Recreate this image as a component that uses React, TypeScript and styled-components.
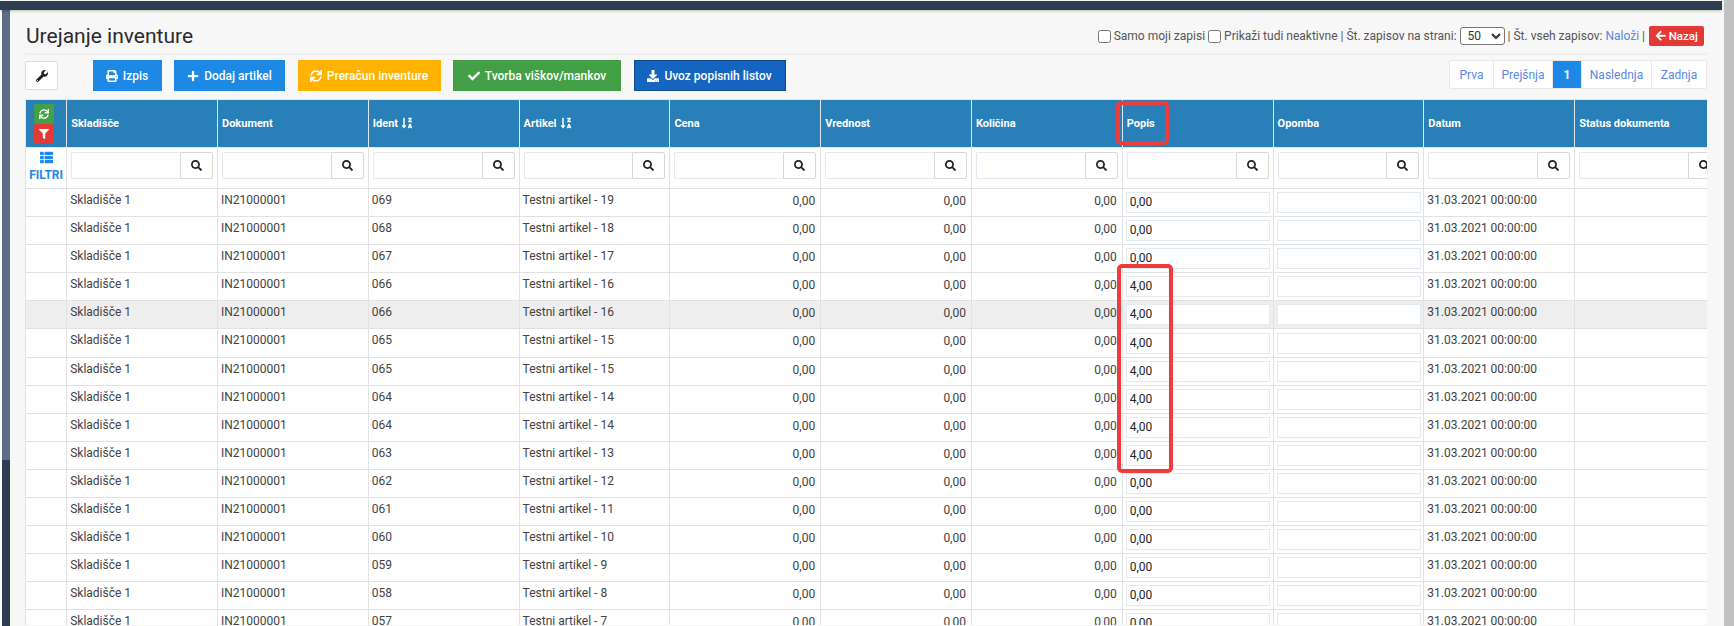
import React from "react";
import styled, { createGlobalStyle } from "styled-components";
import { FaPrint, FaPlus, FaSync, FaCheck, FaDownload, FaWrench, FaSearch, FaThList, FaFilter, FaArrowLeft, FaSortAlphaDownAlt } from "react-icons/fa";

const Global = createGlobalStyle`
  html, body { margin: 0; padding: 0; background: #fff; overflow: hidden; }
  * { box-sizing: border-box; }
  body { font-family: Roboto, "Liberation Sans", sans-serif; font-size: 12px; color: #424242; }
`;

const Shell = styled.div`
  display: flex;
  width: 1734px;
  height: 626px;
  overflow: hidden;
  background: #fff;
`;
const Main = styled.div`
  flex: 1;
  min-width: 0;
  display: flex;
  flex-direction: column;
  padding-top: 1px;
`;
const Scrollbar = styled.div`
  width: 10px;
  background: #c1c1c1;
`;
const TopBar = styled.div`
  height: 9px;
  margin-right: 2px;
  background: #2c3e50;
  box-shadow: 0 1px 3px rgba(0, 0, 0, 0.25);
  position: relative;
  z-index: 2;
`;
const Body = styled.div`
  flex: 1;
  min-height: 0;
  display: flex;
  padding-left: 2px;
`;
const Rail = styled.div`
  width: 8px;
  background: linear-gradient(to bottom, #5d6d82 0, #5d6d82 450px, #2c3e50 450px);
`;
const Panel = styled.div`
  flex: 1;
  min-width: 0;
  padding: 0 17px 0 15px;
  background: #f7f7f7;
  overflow: hidden;
`;
const Header = styled.div`
  height: 45px;
  display: flex;
  justify-content: space-between;
  align-items: center;
  padding: 9px 0 0 1px;
  border-bottom: 2px solid #eeeeee;
`;
const Title = styled.h1`
  margin: 0;
  font-size: 21px;
  font-weight: 400;
  color: #2b2b2b;
`;
const Controls = styled.div`
  display: flex;
  align-items: center;
  gap: 3px;
  padding-right: 3px;
  font-size: 12px;
  color: #555;
  white-space: nowrap;
`;
const Check = styled.input.attrs({ type: "checkbox" })`
  width: 13px;
  height: 13px;
  margin: 0;
`;
const PageSelect = styled.select`
  width: 45px;
  height: 18px;
  font-family: inherit;
  font-size: 12px;
  padding: 0 0 0 3px;
  background: #fff;
  border: 1px solid #767676;
  border-radius: 3px;
  color: #333;
`;
const LinkText = styled.a`
  color: #5b86e5;
`;
const BackButton = styled.button`
  height: 20px;
  width: 55px;
  margin-left: 1px;
  display: inline-flex;
  align-items: center;
  justify-content: center;
  gap: 2px;
  padding: 0;
  border: 0;
  border-radius: 2px;
  background: #e53935;
  color: #fff;
  font-family: inherit;
  font-size: 11.5px;
  font-weight: 500;
`;
const Toolbar = styled.div`
  height: 45px;
  padding-top: 5px;
  display: flex;
  justify-content: space-between;
  align-items: flex-start;
`;
const Actions = styled.div`
  display: flex;
  align-items: center;
  gap: 12.5px;
`;
const WrenchButton = styled.button`
  width: 33px;
  height: 29px;
  margin-right: 22px;
  padding: 0;
  display: flex;
  align-items: center;
  justify-content: center;
  background: #fff;
  border: 1px solid #dcdcdc;
  border-radius: 2px;
  color: #222;
  font-size: 12px;
`;
const ActionButton = styled.button<{ $bg: string; $edge: string; $w: number }>`
  width: ${(p) => p.$w}px;
  height: 31px;
  padding: 0;
  display: flex;
  align-items: center;
  justify-content: center;
  gap: 5px;
  background: ${(p) => p.$bg};
  border: 1px solid ${(p) => p.$edge};
  color: #fff;
  font-family: inherit;
  font-size: 12px;
  font-weight: 500;
  white-space: nowrap;
`;
const Pager = styled.div`
  display: flex;
  height: 29px;
  background: #fff;
  border: 1px solid #e8e8e8;
  border-radius: 2px;
`;
const PageLink = styled.a<{ $w: number; $active?: boolean }>`
  width: ${(p) => p.$w}px;
  display: flex;
  align-items: center;
  justify-content: center;
  font-size: 12px;
  color: ${(p) => (p.$active ? "#fff" : "#5b86e5")};
  background: ${(p) => (p.$active ? "#1e88e5" : "transparent")};
  font-weight: ${(p) => (p.$active ? 700 : 400)};
  border-right: 1px solid #e8e8e8;
  &:last-child { border-right: 0; }
`;
const TableWrap = styled.div`
  position: relative;
  overflow: hidden;
  width: 1682px;
  height: 526px;
  margin-top: -1px;
`;
const Table = styled.table`
  table-layout: fixed;
  width: 1700px;
  border-collapse: collapse;
  background: #fff;
`;
const HeadCell = styled.th`
  height: 48px;
  padding: 0 4px;
  background: #2980b9;
  border: 1px solid #dfe6ec;
  border-bottom: 1px solid #dfe6ec;
  color: #fff;
  font-size: 11px;
  font-weight: 700;
  text-align: left;
  white-space: nowrap;
  svg { font-size: 12px; vertical-align: -2px; margin-left: 3px; }
`;
const StackButton = styled.button<{ $bg: string }>`
  display: flex;
  align-items: center;
  justify-content: center;
  width: 20px;
  height: 20px;
  margin: 0 0 0 4px;
  padding: 0;
  border: 0;
  border-radius: 2px;
  background: ${(p) => p.$bg};
  color: #fff;
  font-size: 9px;
  svg { margin: 0; font-size: 10px; }
`;
const FilterCell = styled.td`
  height: 41px;
  padding: 4px 4px 0;
  vertical-align: top;
  background: #fff;
  border: 1px solid #e2e2e2;
`;
const FilterLabel = styled.div`
  display: flex;
  flex-direction: column;
  align-items: center;
  gap: 5px;
  margin-top: -1px;
  color: #1e88e5;
  font-size: 12px;
  font-weight: 700;
  line-height: 12px;
  svg { font-size: 13px; }
`;
const SearchGroup = styled.div`
  display: flex;
  height: 27px;
`;
const SearchInput = styled.input`
  flex: 1;
  min-width: 0;
  height: 27px;
  border: 1px solid #e4eaf1;
  border-right: 0;
  border-radius: 2px 0 0 2px;
  background: #fff;
`;
const SearchButton = styled.button`
  width: 33px;
  height: 27px;
  padding: 0;
  display: flex;
  align-items: center;
  justify-content: center;
  background: #fff;
  border: 1px solid #d8d8d8;
  border-radius: 0 2px 2px 0;
  color: #222;
  font-size: 11px;
`;
const Row = styled.tr<{ $hl?: boolean }>`
  height: 28.1px;
  background: ${(p) => (p.$hl ? "#eeeeee" : "#fff")};
`;
const Cell = styled.td<{ $num?: boolean }>`
  padding: ${(p) => (p.$num ? "5px 5px 0" : "4px 3px 0")};
  border: 1px solid #e2e2e2;
  vertical-align: top;
  text-align: ${(p) => (p.$num ? "right" : "left")};
  line-height: 15px;
  white-space: nowrap;
  overflow: hidden;
`;
const InputCell = styled.td`
  padding: 0 3px;
  border: 1px solid #e2e2e2;
`;
const ValueInput = styled.input`
  display: block;
  width: 144px;
  height: 21px;
  padding: 0 3px 1px;
  border: 1px solid #e4eaf1;
  background: #fff;
  font-family: inherit;
  font-size: 12px;
  color: #222;
`;
const Marker = styled.div`
  position: absolute;
  border: 4px solid #ee3b3b;
  border-radius: 5px;
  pointer-events: none;
`;

const columns = ["Skladišče", "Dokument", "Ident", "Artikel", "Cena", "Vrednost", "Količina", "Popis", "Opomba", "Datum", "Status dokumenta"];
const rows: [string, number, string][] = [
  ["069", 19, "0,00"], ["068", 18, "0,00"], ["067", 17, "0,00"], ["066", 16, "4,00"],
  ["066", 16, "4,00"], ["065", 15, "4,00"], ["065", 15, "4,00"], ["064", 14, "4,00"],
  ["064", 14, "4,00"], ["063", 13, "4,00"], ["062", 12, "0,00"], ["061", 11, "0,00"],
  ["060", 10, "0,00"], ["059", 9, "0,00"], ["058", 8, "0,00"], ["057", 7, "0,00"],
];
const actions = [
  { label: "Izpis", icon: <FaPrint />, bg: "#1e88e5", edge: "#1e88e5", w: 69 },
  { label: "Dodaj artikel", icon: <FaPlus />, bg: "#1e88e5", edge: "#1e88e5", w: 111 },
  { label: "Preračun inventure", icon: <FaSync />, bg: "#ffb300", edge: "#ffb300", w: 143 },
  { label: "Tvorba viškov/mankov", icon: <FaCheck />, bg: "#43a047", edge: "#43a047", w: 168 },
  { label: "Uvoz popisnih listov", icon: <FaDownload />, bg: "#1565c0", edge: "#0d4a8f", w: 152 },
];
const pages = [
  { label: "Prva", w: 44 }, { label: "Prejšnja", w: 59 }, { label: "1", w: 29, active: true },
  { label: "Naslednja", w: 70 }, { label: "Zadnja", w: 54 },
];

export default function App() {
  return (
    <Shell>
      <Global />
      <Main>
        <TopBar />
        <Body>
          <Rail />
          <Panel>
            <Header>
              <Title>Urejanje inventure</Title>
              <Controls>
                <Check />
                <span>Samo moji zapisi</span>
                <Check />
                <span>Prikaži tudi neaktivne | Št. zapisov na strani:</span>
                <PageSelect defaultValue="50">
                  <option>50</option>
                </PageSelect>
                <span>| Št. vseh zapisov:</span>
                <LinkText>Naloži</LinkText>
                <span>|</span>
                <BackButton><FaArrowLeft />Nazaj</BackButton>
              </Controls>
            </Header>
            <Toolbar>
              <Actions>
                <WrenchButton><FaWrench /></WrenchButton>
                {actions.map((a) => (
                  <ActionButton key={a.label} $bg={a.bg} $edge={a.edge} $w={a.w}>
                    {a.icon}{a.label}
                  </ActionButton>
                ))}
              </Actions>
              <Pager>
                {pages.map((p) => (
                  <PageLink key={p.label} $w={p.w} $active={p.active}>{p.label}</PageLink>
                ))}
              </Pager>
            </Toolbar>
            <TableWrap>
              <Table>
                <colgroup>
                  <col style={{ width: 41.2 }} />
                  {columns.map((c) => <col key={c} style={{ width: 150.8 }} />)}
                </colgroup>
                <thead>
                  <tr>
                    <HeadCell>
                      <StackButton $bg="#43a047"><FaSync /></StackButton>
                      <StackButton $bg="#e53935"><FaFilter /></StackButton>
                    </HeadCell>
                    {columns.map((c) => (
                      <HeadCell key={c}>
                        {c}
                        {(c === "Ident" || c === "Artikel") && <FaSortAlphaDownAlt />}
                      </HeadCell>
                    ))}
                  </tr>
                  <tr>
                    <FilterCell>
                      <FilterLabel><FaThList />FILTRI</FilterLabel>
                    </FilterCell>
                    {columns.map((c) => (
                      <FilterCell key={c}>
                        <SearchGroup>
                          <SearchInput />
                          <SearchButton><FaSearch /></SearchButton>
                        </SearchGroup>
                      </FilterCell>
                    ))}
                  </tr>
                </thead>
                <tbody>
                  {rows.map(([id, n, val], i) => (
                    <Row key={i} $hl={i === 4}>
                      <Cell />
                      <Cell>Skladišče 1</Cell>
                      <Cell>IN21000001</Cell>
                      <Cell>{id}</Cell>
                      <Cell>Testni artikel - {n}</Cell>
                      <Cell $num>0,00</Cell>
                      <Cell $num>0,00</Cell>
                      <Cell $num>0,00</Cell>
                      <InputCell><ValueInput defaultValue={val} /></InputCell>
                      <InputCell><ValueInput /></InputCell>
                      <Cell>31.03.2021 00:00:00</Cell>
                      <Cell />
                    </Row>
                  ))}
                </tbody>
              </Table>
              <Marker style={{ left: 1090.5, top: 1.5, width: 53, height: 44 }} />
              <Marker style={{ left: 1091.5, top: 165, width: 56, height: 209 }} />
            </TableWrap>
          </Panel>
        </Body>
      </Main>
      <Scrollbar />
    </Shell>
  );
}
